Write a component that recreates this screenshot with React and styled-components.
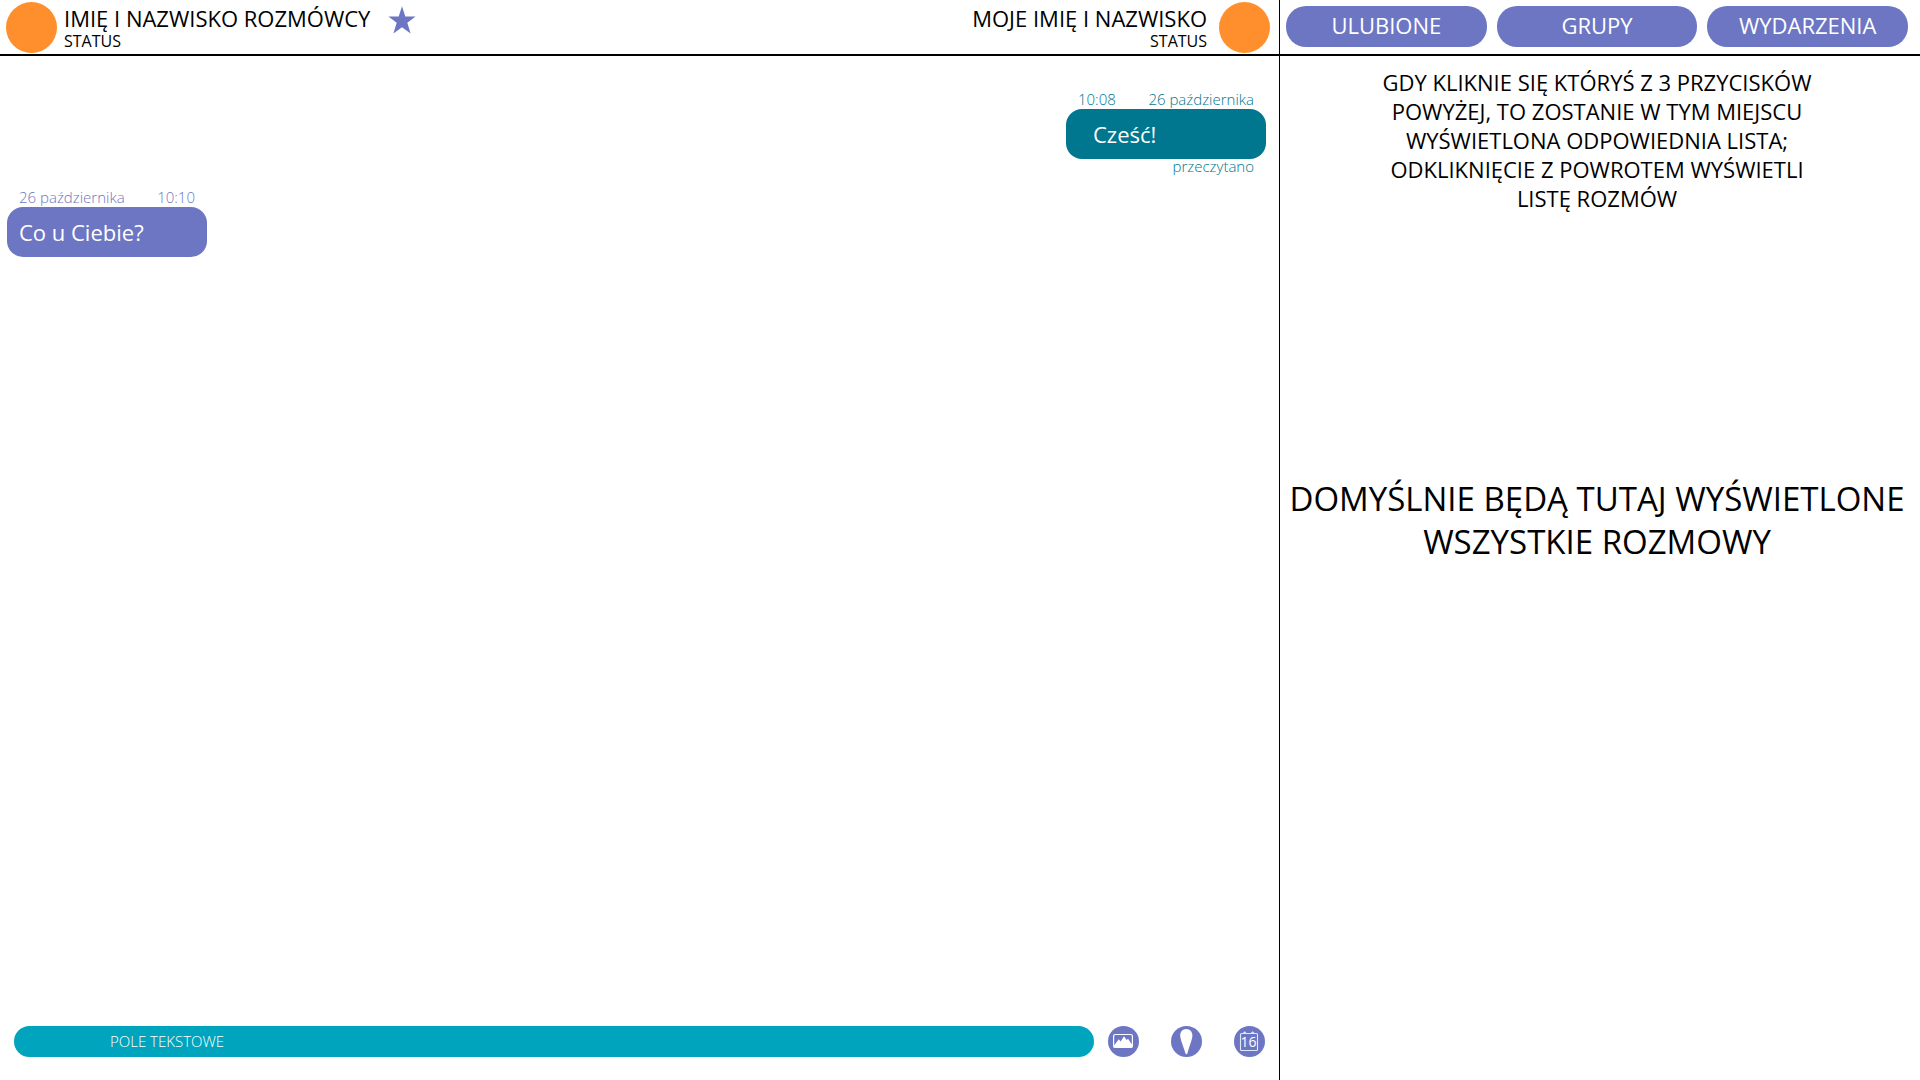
import React from "react";
import styled, { createGlobalStyle } from "styled-components";

const violet = "#6d76c3";
const teal = "#00778f";
const cyan = "#00a4bc";
const orange = "#ff8f2d";

const GlobalStyle = createGlobalStyle`
  *, *::before, *::after { box-sizing: border-box; }
  body {
    margin: 0;
    background: #fff;
    color: #000;
    font-family: "Open Sans", "Noto Sans", sans-serif;
    font-size: 22px;
  }
  h1, h2, p { margin: 0; font-size: inherit; font-weight: 400; }
  button, input { font: inherit; border: 0; }
  button { padding: 0; cursor: pointer; }
`;

const Page = styled.div`
  display: grid;
  grid-template-columns: 2fr 1fr;
  min-height: 100vh;
`;

const Conversation = styled.main`
  display: flex;
  flex-direction: column;
  min-width: 0;
  border-right: 1px solid #000;
`;

const Sidebar = styled.aside`
  display: flex;
  flex-direction: column;
  min-width: 0;
`;

const Header = styled.header`
  display: flex;
  align-items: flex-start;
  justify-content: space-between;
  height: 56px;
  padding: 2px 9px 0 6px;
  border-bottom: 2px solid #000;
`;

const Person = styled.section`
  display: flex;
  flex-direction: ${(p) => (p.$own ? "row-reverse" : "row")};
  gap: ${(p) => (p.$own ? 12 : 7)}px;
  text-align: ${(p) => (p.$own ? "right" : "left")};
`;

const Avatar = styled.div`
  width: 51px;
  height: 51px;
  border-radius: 50%;
  background: ${orange};
`;

const Identity = styled.div`
  padding-top: 4px;
`;

const Name = styled.h1`
  line-height: 25px;
`;

const Status = styled.p`
  font-size: 16px;
  line-height: 20px;
`;

const StarButton = styled.button`
  display: flex;
  align-self: flex-start;
  margin: 4px 0 0 11px;
  background: none;
`;

const Messages = styled.div`
  flex: 1;
  display: flex;
  flex-direction: column;
  gap: 15px;
  padding: 34px 13px 34px 7px;
`;

const Message = styled.article`
  width: 200px;
  align-self: ${(p) => (p.$own ? "flex-end" : "flex-start")};
  color: ${(p) => (p.$own ? teal : violet)};
  font-size: 15px;
  font-weight: 300;
`;

const Meta = styled.div`
  display: flex;
  justify-content: space-between;
  padding: 0 12px;
  line-height: 19px;
`;

const Bubble = styled.p`
  padding: 0 ${(p) => (p.$own ? 27 : 12)}px;
  border-radius: 16px;
  background: ${(p) => (p.$own ? teal : violet)};
  color: #fff;
  font-size: 22px;
  line-height: 50px;
`;

const Receipt = styled.p`
  padding: 0 12px;
  text-align: right;
  font-weight: 300;
  line-height: 14px;
`;

const Composer = styled.form`
  display: flex;
  align-items: center;
  padding: 0 14px 23px;
`;

const TextField = styled.input`
  flex: 1;
  min-width: 0;
  height: 31px;
  margin-right: 14px;
  padding: 0 96px 2px;
  border-radius: 16px;
  background: ${cyan};
  color: #fff;
  font-size: 15px;
  font-weight: 300;
  &::placeholder { color: #fff; opacity: 1; }
`;

const Tools = styled.div`
  display: flex;
  gap: 32px;
`;

const ToolButton = styled.button`
  display: flex;
  width: 31px;
  height: 31px;
  border-radius: 50%;
  background: ${violet};
`;

const Tabs = styled.nav`
  display: grid;
  grid-template-columns: repeat(3, 1fr);
  gap: 10px;
  height: 56px;
  padding: 6px 12px 7px 6px;
  border-bottom: 2px solid #000;
`;

const Tab = styled.button`
  border-radius: 20px;
  background: ${violet};
  color: #fff;
  line-height: 38px;
  padding-bottom: 3px;
`;

const SidebarBody = styled.div`
  display: flex;
  flex-direction: column;
  align-items: center;
  gap: 264px;
  padding: 12px 12px 12px 6px;
  text-align: center;
`;

const Hint = styled.p`
  max-width: 450px;
  line-height: 29px;
`;

const Placeholder = styled.h2`
  font-size: 33px;
  line-height: 43px;
`;

const StarIcon = () => (
  <svg width="28" height="28" viewBox="0 0 28 28" aria-hidden="true">
    <path fill={violet} d="M14 0.3 17.3 10.4H27.6L19.3 16.8 22.6 27.6 14 21.2 5.4 27.6 8.7 16.8 0.4 10.4H10.7Z" />
  </svg>
);

const ImageIcon = () => (
  <svg width="31" height="31" viewBox="0 0 31 31" aria-hidden="true">
    <rect x="5.6" y="8.5" width="18.8" height="13" rx="1.6" fill="none" stroke="#fff" strokeWidth="1.2" />
    <path fill="#fff" d="M6 21.2V19.6L10.8 13.2 12.6 15.4 16 10.2 18.6 14 20 12.8 24 18.6V21.2Z" />
  </svg>
);

const PinIcon = () => (
  <svg width="31" height="31" viewBox="0 0 31 31" aria-hidden="true">
    <path fill="#fff" d="M15.3 3C18.9 3 21.4 5.8 21.4 9.4 21.4 13.4 17.8 21.5 16.4 27.6Q15.4 29 14.5 27.6C12.9 21.5 9.2 13.4 9.2 9.4 9.2 5.8 11.7 3 15.3 3Z" />
  </svg>
);

const CalendarDay = styled.text`
  font-family: "Open Sans", sans-serif;
  font-size: 14px;
  fill: #fff;
  text-anchor: middle;
`;

const CalendarIcon = () => (
  <svg width="31" height="31" viewBox="0 0 31 31" aria-hidden="true">
    <rect x="6.5" y="7.5" width="17" height="17" rx="1" fill="none" stroke="#e4e5f5" strokeWidth="1.1" />
    <path d="M9 7.6Q10.7 4 12.4 7.6M17 7.6Q18.7 4 20.4 7.6" fill="#e4e5f5" stroke="#e4e5f5" strokeWidth="0.8" />
    <CalendarDay x="14.6" y="21">16</CalendarDay>
  </svg>
);

export default function App() {
  return (
    <>
      <GlobalStyle />
      <Page>
        <Conversation>
          <Header>
            <Person>
              <Avatar />
              <Identity>
                <Name>IMIĘ I NAZWISKO ROZMÓWCY</Name>
                <Status>STATUS</Status>
              </Identity>
              <StarButton type="button" aria-label="Ulubione">
                <StarIcon />
              </StarButton>
            </Person>
            <Person $own>
              <Avatar />
              <Identity>
                <Name as="h2">MOJE IMIĘ I NAZWISKO</Name>
                <Status>STATUS</Status>
              </Identity>
            </Person>
          </Header>
          <Messages>
            <Message $own>
              <Meta>
                <time>10:08</time>
                <time>26 października</time>
              </Meta>
              <Bubble $own>Cześć!</Bubble>
              <Receipt>przeczytano</Receipt>
            </Message>
            <Message>
              <Meta>
                <time>26 października</time>
                <time>10:10</time>
              </Meta>
              <Bubble>Co u Ciebie?</Bubble>
            </Message>
          </Messages>
          <Composer onSubmit={(e) => e.preventDefault()}>
            <TextField type="text" aria-label="Pole tekstowe" placeholder="POLE TEKSTOWE" />
            <Tools>
              <ToolButton type="button" aria-label="Zdjęcie"><ImageIcon /></ToolButton>
              <ToolButton type="button" aria-label="Lokalizacja"><PinIcon /></ToolButton>
              <ToolButton type="button" aria-label="Wydarzenie"><CalendarIcon /></ToolButton>
            </Tools>
          </Composer>
        </Conversation>
        <Sidebar>
          <Tabs>
            <Tab type="button">ULUBIONE</Tab>
            <Tab type="button">GRUPY</Tab>
            <Tab type="button">WYDARZENIA</Tab>
          </Tabs>
          <SidebarBody>
            <Hint>
              GDY KLIKNIE SIĘ KTÓRYŚ Z 3 PRZYCISKÓW POWYŻEJ, TO ZOSTANIE W TYM MIEJSCU
              WYŚWIETLONA ODPOWIEDNIA LISTA; ODKLIKNIĘCIE Z POWROTEM WYŚWIETLI LISTĘ ROZMÓW
            </Hint>
            <Placeholder>DOMYŚLNIE BĘDĄ TUTAJ WYŚWIETLONE WSZYSTKIE ROZMOWY</Placeholder>
          </SidebarBody>
        </Sidebar>
      </Page>
    </>
  );
}
